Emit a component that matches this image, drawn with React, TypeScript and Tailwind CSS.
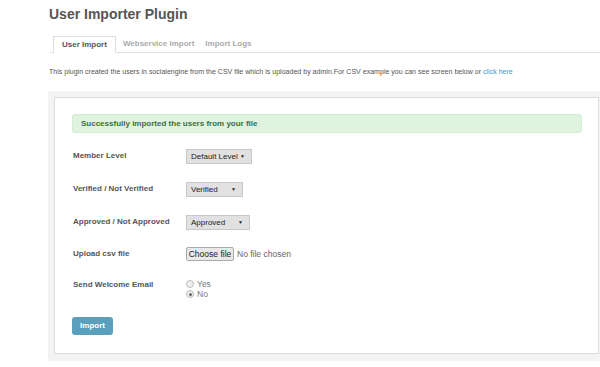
const Select = ({ value, width }: { value: string; width: string }) => (
  <div
    className={`flex h-[15px] items-center justify-between whitespace-nowrap border border-[#c8c8c8] bg-[#e1e1e1] pl-[4px] pr-[6px] text-[8px] leading-none text-[#222] ${width}`}
  >
    <span>{value}</span>
    <span className="text-[5px]">▼</span>
  </div>
);

const Radio = ({ label, checked }: { label: string; checked?: boolean }) => (
  <label className="flex h-[10px] items-center gap-[3px] text-[8.5px] leading-none text-[#777]">
    <span className="flex size-[8px] items-center justify-center rounded-full border border-[#bbb] bg-[#eee]">
      {checked && <span className="size-[3px] rounded-full bg-[#666]" />}
    </span>
    {label}
  </label>
);

const Row = ({ label, gap, children }: { label: string; gap: string; children: React.ReactNode }) => (
  <div className={`flex items-start ${gap}`}>
    <div className="w-[114px] pl-[1px] pt-[2px] text-[8px] font-bold leading-[10px] text-[#555]">{label}</div>
    {children}
  </div>
);

export default function App() {
  return (
    <div className="h-[367px] w-[600px] overflow-hidden bg-white font-['Liberation_Sans',Arial,sans-serif]">
      <h1 className="pl-[49px] pt-[6px] text-[14px] font-bold leading-[17px] text-[#555]">
        User Importer Plugin
      </h1>

      <div className="ml-[50px] mt-[13px] flex border-b border-[#ddd] text-[8px] font-bold">
        <div className="-mb-px ml-[3px] flex h-[17px] items-center border border-b-white border-[#ddd] bg-white px-[8px] text-[#555]">
          User Import
        </div>
        <div className="flex h-[16px] items-center pl-[7px] pr-[11px] text-[#aaa]">Webservice Import</div>
        <div className="flex h-[16px] items-center text-[#aaa]">Import Logs</div>
      </div>

      <p className="mt-[14px] whitespace-nowrap pl-[49px] text-[7.05px] leading-[10px] text-[#555]">
        This plugin created the users in socialengine from the CSV file which is uploaded by admin.For CSV
        example you can see screen below or <a className="text-[#3a9ad9]">click here</a>
      </p>

      <div className="ml-[48px] mt-[14px] bg-[#f3f3f3] pb-[7px] pl-[6px] pr-[1px] pt-[6px]">
        <div className="h-[257px] border border-[#dcdcdc] bg-white pl-[17px] pr-[16px] pt-[16px]">
          <div className="flex h-[19px] items-center rounded-[3px] border border-[#d3ecd3] bg-[#dff3df] pl-[8px] text-[8px] font-bold text-[#3d6e44]">
            Successfully imported the users from your file
          </div>

          <Row label="Member Level" gap="mt-[16px]">
            <Select value="Default Level" width="w-[66px]" />
          </Row>
          <Row label="Verified / Not Verified" gap="mt-[18px]">
            <Select value="Verified" width="w-[57px]" />
          </Row>
          <Row label="Approved / Not Approved" gap="mt-[18px]">
            <Select value="Approved" width="w-[64px]" />
          </Row>
          <Row label="Upload csv file" gap="mt-[17px]">
            <div className="flex items-center gap-[3px] text-[8.5px] leading-none">
              <div className="flex h-[14px] w-[48px] items-center justify-center rounded-[2px] border border-[#a9a9a9] bg-[#e9e9e9] text-[#222]">
                Choose file
              </div>
              <span className="text-[#666]">No file chosen</span>
            </div>
          </Row>
          <Row label="Send Welcome Email" gap="mt-[17px]">
            <div className="flex flex-col pt-[1px]">
              <Radio label="Yes" />
              <Radio label="No" checked />
            </div>
          </Row>

          <button className="mt-[18px] flex h-[18px] w-[41px] items-center justify-center rounded-[3px] bg-[#5aa0bd] text-[8px] font-bold text-white">
            Import
          </button>
        </div>
      </div>
    </div>
  );
}
